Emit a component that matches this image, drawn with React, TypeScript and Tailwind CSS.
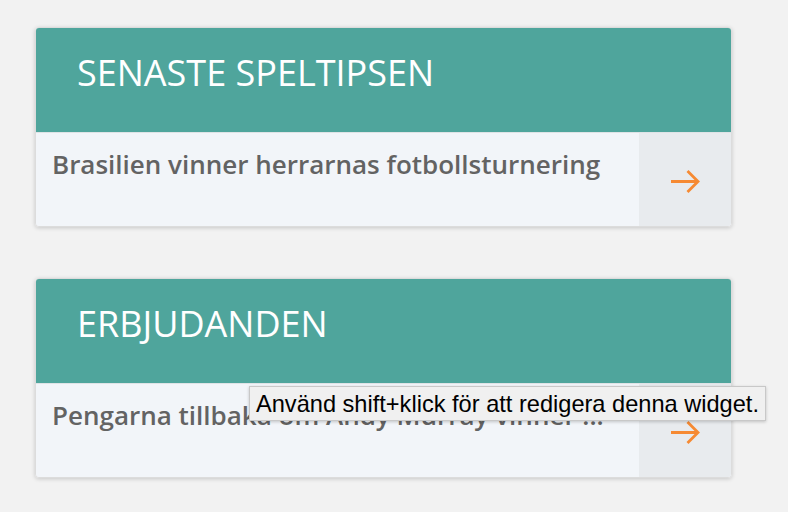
import React from 'react';

const Arrow = () => (
  <svg width="30" height="24" viewBox="0 0 30 24" fill="none">
    <path d="M1 12.5H28M17.5 2L28 12.5L17.5 23" stroke="#f68a33" strokeWidth="2.8" />
  </svg>
);

const Widget = ({ title, text }: { title: string; text: string }) => (
  <div className="w-[697px] rounded-[4px] overflow-hidden shadow-[0_1px_4px_rgba(0,0,0,0.18)] border border-[#dcdcdc]">
    <div className="h-[104px] bg-[#4fa59c] pl-[41px] pt-[22px]">
      <h2 className="text-[36px] leading-[46px] text-white font-normal">{title}</h2>
    </div>
    <div className="flex h-[94px] bg-[#f2f5f9] border-t border-[#dfe3e6]">
      <div className="flex-1 pl-[16px] pt-[14px] text-[26px] leading-[34px] font-semibold text-[#636363]">
        {text}
      </div>
      <div className="w-[92px] bg-[#e8ebee] flex items-center justify-center pt-[2px]">
        <Arrow />
      </div>
    </div>
  </div>
);

export default function App() {
  return (
    <div
      className="w-[788px] h-[512px] bg-[#f2f2f2] pl-[35px] pt-[27px] relative"
      style={{ fontFamily: '"Open Sans", sans-serif' }}
    >
      <div className="flex flex-col gap-[51px]">
        <Widget title="SENASTE SPELTIPSEN" text="Brasilien vinner herrarnas fotbollsturnering" />
        <Widget title="ERBJUDANDEN" text="Pengarna tillbaka om Andy Murray vinner ..." />
      </div>
      <div
        className="absolute left-[249px] top-[386px] h-[35px] px-[6px] flex items-center bg-[#f0f0f0] border border-[#c8c8c8] shadow-[0_1px_3px_rgba(0,0,0,0.2)] text-[23.6px] leading-[26px] text-black whitespace-nowrap"
        style={{ fontFamily: '"Liberation Sans", Arial, sans-serif' }}
      >
        Använd shift+klick för att redigera denna widget.
      </div>
    </div>
  );
}
